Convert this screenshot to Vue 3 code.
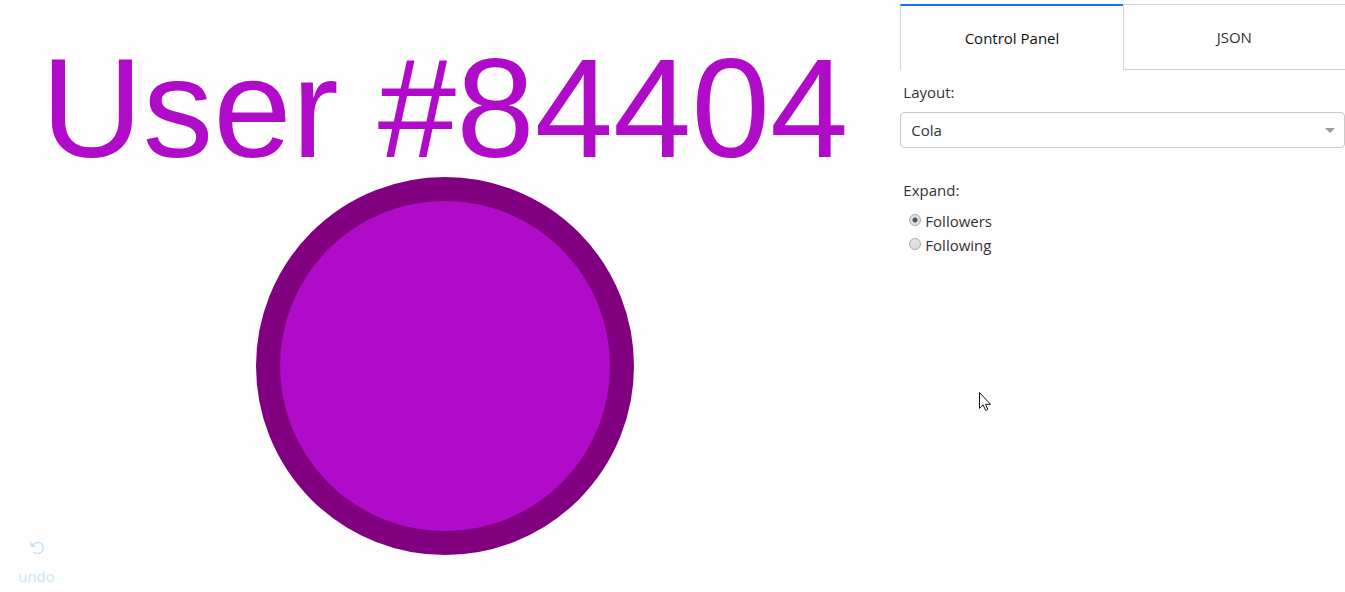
<script setup>
import { ref } from 'vue'

const tabs = ['Control Panel', 'JSON']
const activeTab = ref('Control Panel')
const layouts = ['Cola', 'Concentric', 'Grid']
const layout = ref('Cola')
const expandOptions = ['Followers', 'Following']
const expand = ref('Followers')
const userName = ref('User #84404')
</script>

<template>
  <div class="app">
    <main class="graph">
      <div class="node">
        <span class="node-label">{{ userName }}</span>
        <div class="node-circle"></div>
      </div>
      <button class="undo" type="button">
        <svg class="undo-icon" viewBox="0 0 14 14" aria-hidden="true">
          <path d="M1 1v4h4" />
          <path d="M1.300 4.800C3.400 2.600 5.600 1.500 8 1.500c3 0 5.200 2.300 5.200 5.300S11 12.400 8 12.400c-2 0-3.600-.300-4.800-1.400" />
        </svg>
        <span>undo</span>
      </button>
    </main>

    <aside class="panel">
      <div class="tabs" role="tablist">
        <button
          v-for="tab in tabs"
          :key="tab"
          type="button"
          role="tab"
          class="tab"
          :class="{ active: tab === activeTab }"
          :aria-selected="tab === activeTab"
          @click="activeTab = tab"
        >{{ tab }}</button>
      </div>

      <label class="heading" for="layout">Layout:</label>
      <div class="select-wrap">
        <select id="layout" v-model="layout" class="select">
          <option v-for="item in layouts" :key="item">{{ item }}</option>
        </select>
        <svg class="arrow" viewBox="0 0 10 5" aria-hidden="true"><path d="M0 0h10L5 5z" /></svg>
      </div>

      <fieldset class="expand">
        <legend class="heading">Expand:</legend>
        <label v-for="item in expandOptions" :key="item" class="option">
          <input v-model="expand" type="radio" name="expand" :value="item" class="radio" />
          <span>{{ item }}</span>
        </label>
      </fieldset>

      <svg class="pointer" viewBox="0 0 12 20" aria-hidden="true">
        <path d="M.5.5v15.800l3.600-3.500 2.400 5.400q1.200.7 2.300-.900l-2.300-5h5z" />
      </svg>
    </aside>
  </div>
</template>

<style>
body {
  margin: 0;
  background: #fefefe;
}
</style>

<style scoped>
.app {
  display: grid;
  grid-template-columns: 2fr 1fr;
  column-gap: 11px;
  min-height: 100vh;
  font-family: "Open Sans", "Noto Sans", sans-serif;
  font-size: 15px;
  line-height: 24px;
  color: #333;
}
.app * {
  box-sizing: border-box;
}
button,
select {
  font: inherit;
  color: inherit;
}
.graph {
  position: relative;
  display: flex;
  justify-content: center;
  padding-top: 39px;
}
.node {
  display: flex;
  flex-direction: column;
  align-items: center;
}
.node-label {
  font-family: "Liberation Sans", Arial, sans-serif;
  font-size: 141px;
  line-height: 138px;
  white-space: nowrap;
  color: #b00bc8;
}
.node-circle {
  width: 378px;
  height: 378px;
  border: 24px solid #800080;
  border-radius: 50%;
  background: #b00bc8;
}
.undo {
  position: absolute;
  left: 16px;
  bottom: 4px;
  display: flex;
  flex-direction: column;
  align-items: center;
  gap: 9px;
  width: 41px;
  padding: 0;
  border: 0;
  background: none;
  color: #c9e6fa;
}
.undo-icon {
  width: 14px;
  height: 14px;
  fill: none;
  stroke: #bfe0f8;
  stroke-width: 1.3;
}
.panel {
  position: relative;
  padding-top: 4px;
}
.tabs {
  display: grid;
  grid-template-columns: 1fr 1fr;
  height: 66px;
}
.tab {
  padding: 0;
  border: 1px solid #d3d3d3;
  border-right: 0;
  background: none;
}
.tab.active {
  border-top: 2px solid #1873f2;
  border-bottom: 0;
  color: #111;
}
.heading {
  display: block;
  padding: 0 3px;
}
.tabs + .heading {
  margin: 10px 0 8px;
}
.select-wrap {
  position: relative;
}
.select {
  display: block;
  width: 100%;
  height: 36px;
  padding: 0 10px;
  border: 1px solid #c9c9c9;
  border-radius: 4px;
  background: none;
  appearance: none;
}
.arrow {
  position: absolute;
  top: 16px;
  right: 10px;
  width: 10px;
  height: 5px;
  fill: #999;
}
.expand {
  margin: 30px 0 0;
  padding: 0;
  border: 0;
}
.expand .heading {
  margin-bottom: 7px;
}
.option {
  display: flex;
  align-items: center;
  gap: 4px;
  padding-left: 9px;
}
.radio {
  width: 12px;
  height: 12px;
  margin: 0 0 2px;
  border: 1px solid #a9a9a9;
  border-radius: 50%;
  background: linear-gradient(#e9e9e9, #d8d8d8);
  appearance: none;
}
.radio:checked {
  background: radial-gradient(circle, #555 0 2px, #e0e0e0 3px);
}
.pointer {
  position: absolute;
  left: 79px;
  top: 392px;
  width: 12px;
  height: 20px;
  fill: #fff;
  stroke: #111;
}
</style>
